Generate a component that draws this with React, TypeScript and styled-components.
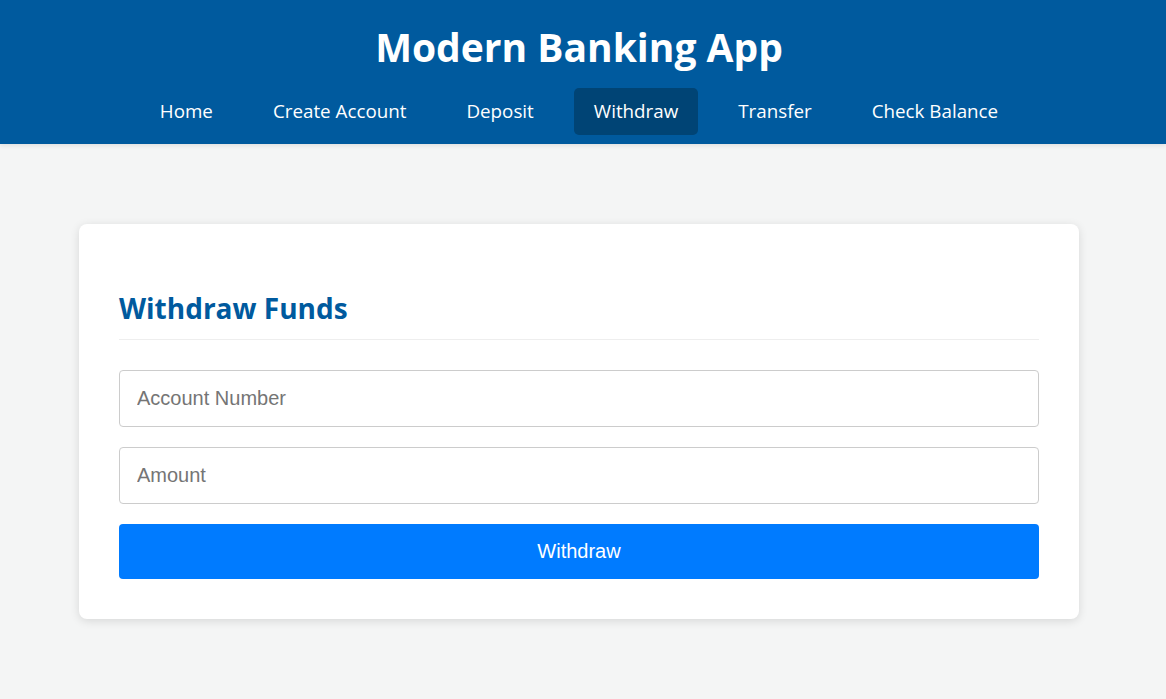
import React from 'react';
import styled, { createGlobalStyle } from 'styled-components';

const GlobalStyle = createGlobalStyle`
    * {
        box-sizing: border-box;
    }

    body {
        margin: 0;
        background: #f4f5f5;
        font-family: 'Open Sans', 'Noto Sans', sans-serif;
    }
`;

const Header = styled.header`
    background: #005a9e;
    color: #fff;
    padding: 20px 8px 9px 0;
    text-align: center;
    box-shadow: 0 2px 4px rgba(0, 0, 0, 0.08);
`;

const Title = styled.h1`
    margin: 0 0 14px;
    font-size: 39px;
    line-height: 54px;
    font-weight: 700;
`;

const Nav = styled.nav`
    display: flex;
    justify-content: center;
    gap: 20px;
`;

const NavItem = styled.a<{ $active?: boolean }>`
    display: block;
    padding: 0 20px;
    height: 47px;
    line-height: 47px;
    font-size: 18.8px;
    color: #fff;
    text-decoration: none;
    border-radius: 5px;
    background: ${(p) => (p.$active ? '#004475' : 'transparent')};
    cursor: pointer;
`;

const Main = styled.main`
    display: flex;
    justify-content: center;
    padding: 80px 8px 80px 0;
`;

const Card = styled.section`
    width: 1000px;
    background: #fff;
    border-radius: 8px;
    padding: 40px;
    box-shadow: 0 2px 10px rgba(0, 0, 0, 0.12);
`;

const Heading = styled.h2`
    margin: 25px 0 30px;
    padding-bottom: 12px;
    border-bottom: 1px solid #eeeeee;
    color: #005a9e;
    font-size: 28px;
    line-height: 38px;
    font-weight: 700;
`;

const Form = styled.form`
    display: flex;
    flex-direction: column;
    gap: 20px;
`;

const Input = styled.input`
    width: 100%;
    height: 57px;
    padding: 0 17px;
    border: 1px solid #cccccc;
    border-radius: 4px;
    font-family: 'Liberation Sans', Arial, sans-serif;
    font-size: 20px;
    color: #333;
    outline: none;

    &::placeholder {
        color: #757575;
    }
`;

const Button = styled.button`
    height: 55px;
    border: none;
    border-radius: 4px;
    background: #007bff;
    color: #fff;
    font-family: 'Liberation Sans', Arial, sans-serif;
    font-size: 20px;
    cursor: pointer;
`;

const links = ['Home', 'Create Account', 'Deposit', 'Withdraw', 'Transfer', 'Check Balance'];

const App = () => {
    return (
        <>
            <GlobalStyle />
            <Header>
                <Title>Modern Banking App</Title>
                <Nav>
                    {links.map((l) => (
                        <NavItem key={l} $active={l === 'Withdraw'}>
                            {l}
                        </NavItem>
                    ))}
                </Nav>
            </Header>
            <Main>
                <Card>
                    <Heading>Withdraw Funds</Heading>
                    <Form onSubmit={(e) => e.preventDefault()}>
                        <Input placeholder="Account Number" />
                        <Input placeholder="Amount" />
                        <Button type="submit">Withdraw</Button>
                    </Form>
                </Card>
            </Main>
        </>
    );
};

export default App;
